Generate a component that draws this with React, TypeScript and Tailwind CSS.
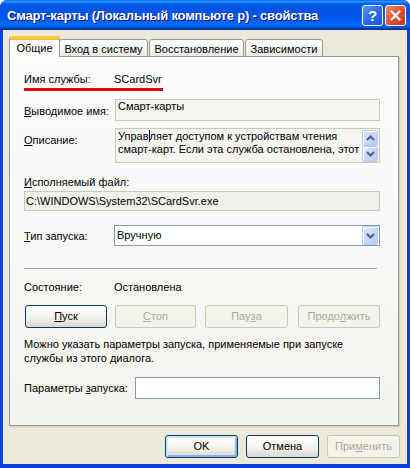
import React from "react";

const Chev = ({ up = false }: { up?: boolean }) => (
  <svg width="9" height="6" viewBox="0 0 9 6">
    <path
      d={up ? "M1 5 L4.5 1.5 L8 5" : "M1 1 L4.5 4.5 L8 1"}
      fill="none"
      stroke="#4D6185"
      strokeWidth="2"
    />
  </svg>
);

const ScrollBtn = ({ up = false, h }: { up?: boolean; h: string }) => (
  <div
    className={`w-[16px] ${h} flex items-center justify-center rounded-[2px] border border-[#B7CBF6] bg-gradient-to-br from-[#DCE7FE] to-[#B6CBFA] shadow-[inset_1px_1px_0_#FFFFFF]`}
  >
    <Chev up={up} />
  </div>
);

const Btn = ({
  children,
  w,
  disabled = false,
  def = false,
  cls = "",
}: {
  children: React.ReactNode;
  w: string;
  disabled?: boolean;
  def?: boolean;
  cls?: string;
}) => (
  <div
    className={`${w} h-[23px] ${cls} flex items-center justify-center rounded-[3px] border ${
      disabled
        ? "border-[#C9C7BA] bg-[#F5F4EA] text-[#ACA899]"
        : "border-[#003C74] bg-gradient-to-b from-[#FFFFFF] via-[#F5F4EF] to-[#DCD8CC] text-black"
    } ${def ? "shadow-[inset_1px_1px_0_1px_#CEE7FF,inset_-1px_-1px_0_1px_#8DAEEC]" : ""}`}
  >
    {children}
  </div>
);

export default function App() {
  return (
    <div className="w-[410px] h-[468px] font-['Liberation_Sans',Arial,sans-serif] text-[11px] leading-[13px] text-black overflow-hidden flex flex-col bg-[#0842D8] rounded-t-[7px]">
      {/* Title bar */}
      <div className="h-[30px] shrink-0 flex items-center pl-[7px] pr-[4px] rounded-t-[7px] bg-[linear-gradient(to_bottom,#0058ee_0%,#3593ff_4%,#288eff_6%,#127dff_8%,#036ffc_10%,#0262ee_14%,#0057e5_20%,#0054e3_24%,#0055eb_56%,#005bf5_66%,#026afe_76%,#0062ef_86%,#0052d6_92%,#0040ab_94%,#003092_100%)]">
        <div className="flex-1 min-w-0 whitespace-nowrap text-white font-bold text-[13px] leading-[16px] [text-shadow:1px_1px_#0F1089] tracking-[-0.2px] pt-[1px]">
          Смарт-карты (Локальный компьюте р) - свойства
        </div>
        <div className="flex gap-[2px] mt-[1px] shrink-0">
          <div className="w-[21px] h-[21px] rounded-[3px] border border-white bg-gradient-to-br from-[#5A97F8] via-[#2B6CE6] to-[#1E56CF] flex items-center justify-center text-white font-bold text-[15px] leading-none">
            ?
          </div>
          <div className="w-[21px] h-[21px] rounded-[3px] border border-white bg-gradient-to-br from-[#F08A64] via-[#DD5230] to-[#C23A15] flex items-center justify-center">
            <svg width="11" height="11" viewBox="0 0 11 11">
              <path d="M1.5 1.5 L9.5 9.5 M9.5 1.5 L1.5 9.5" stroke="#FFFFFF" strokeWidth="2.2" strokeLinecap="square" />
            </svg>
          </div>
        </div>
      </div>

      {/* Body */}
      <div className="flex-1 mx-[3px] mb-[4px] bg-[#ECE9D8] flex flex-col pl-[6px] pt-[6px]">
        {/* Tabs */}
        <div className="flex items-end h-[21px]">
          <div className="relative z-10 w-[51px] h-[21px] bg-white border-x border-[#919B9C] rounded-t-[3px] border-t-[3px] border-t-[#FFC83C] shadow-[inset_0_1px_0_#F4B44A] flex items-start justify-center pt-[3px]">
            Общие
          </div>
          <div className="-ml-px w-[89px] h-[18px] border border-[#919B9C] rounded-t-[3px] bg-gradient-to-b from-[#FFFFFF] to-[#ECEBE6] flex justify-center pt-[3px]">
            Вход в систему
          </div>
          <div className="ml-px w-[95px] h-[18px] border border-[#919B9C] rounded-t-[3px] bg-gradient-to-b from-[#FFFFFF] to-[#ECEBE6] flex justify-center pt-[3px]">
            Восстановление
          </div>
          <div className="ml-px w-[78px] h-[18px] border border-[#919B9C] rounded-t-[3px] bg-gradient-to-b from-[#FFFFFF] to-[#ECEBE6] flex justify-center pt-[3px]">
            Зависимости
          </div>
        </div>

        {/* Panel */}
        <div className="relative -mt-px w-[390px] h-[370px] border border-[#919B9C] bg-gradient-to-b from-[#FCFCFE] to-[#F4F3EE] shadow-[1px_1px_0_#D0CEBF,2px_2px_0_#E3E0D0] pl-[14px] flex flex-col">
          {/* Service name */}
          <div className="mt-[16px] flex h-[13px]">
            <div className="w-[90px]">Имя службы:</div>
            <div>SCardSvr</div>
          </div>
          <div className="mt-[2px] h-[3px] w-[139px] bg-[#E80000]" />

          {/* Display name */}
          <div className="mt-[8px] flex h-[22px]">
            <div className="w-[91px] pt-[6px]">
              <u>В</u>ыводимое имя:
            </div>
            <div className="w-[265px] h-[22px] border border-[#CBC8B8] bg-[#F6F5F1] pl-[2px]">Смарт-карты</div>
          </div>

          {/* Description */}
          <div className="mt-[7px] flex h-[35px]">
            <div className="w-[91px] pt-[6px]">
              <u>О</u>писание:
            </div>
            <div className="w-[265px] h-[35px] border border-[#CBC8B8] bg-[#F6F5F1] flex">
              <div className="flex-1 pl-[2px] pt-px leading-[12.5px]">
                Управ<span className="inline-block w-px h-[12px] bg-black align-[-2px]" />ляет доступом к устройствам чтения
                <br />
                смарт-карт. Если эта служба остановлена, этот
              </div>
              <div className="flex flex-col pr-px pt-px">
                <ScrollBtn up h="h-[17px]" />
                <ScrollBtn h="h-[16px]" />
              </div>
            </div>
          </div>

          {/* Executable */}
          <div className="mt-[13px] h-[13px]">
            <u>И</u>сполняемый файл:
          </div>
          <div className="mt-[2px] w-[356px] h-[20px] border border-[#CBC8B8] bg-[#F1F0EA] flex items-center pl-[1px]">
            C:\WINDOWS\System32\SCardSvr.exe
          </div>

          {/* Startup type */}
          <div className="mt-[14px] flex h-[21px]">
            <div className="w-[90px] pt-[5px]">
              <u>Т</u>ип запуска:
            </div>
            <div className="w-[266px] h-[21px] border border-[#7F9DB9] bg-white flex items-center">
              <div className="flex-1 pl-[2px]">Вручную</div>
              <div className="mr-px w-[16px] h-[19px]">
                <ScrollBtn h="h-[19px]" />
              </div>
            </div>
          </div>

          {/* Separator */}
          <div className="mt-[22px] w-[353px] h-[2px] border-t border-[#ACA899] border-b border-b-white" />

          {/* Status */}
          <div className="mt-[11px] flex h-[13px]">
            <div className="w-[90px]">Состояние:</div>
            <div>Остановлена</div>
          </div>

          {/* Service buttons */}
          <div className="mt-[11px] flex">
            <Btn w="w-[82px]" cls="ml-px">
              <span>
                <u>П</u>уск
              </span>
            </Btn>
            <Btn w="w-[81px]" cls="ml-[8px]" disabled>
              <span>
                <u>С</u>топ
              </span>
            </Btn>
            <Btn w="w-[83px]" cls="ml-[9px]" disabled>
              <span>
                Пау<u>з</u>а
              </span>
            </Btn>
            <Btn w="w-[82px]" cls="ml-[10px]" disabled>
              <span>
                Продо<u>л</u>жить
              </span>
            </Btn>
          </div>

          {/* Hint */}
          <div className="mt-[10px] leading-[13.5px]">
            Можно указать параметры запуска, применяемые при запуске
            <br />
            службы из этого диалога.
          </div>

          {/* Params */}
          <div className="mt-[12px] flex h-[22px]">
            <div className="w-[111px] pt-[5px]">
              Параметры <u>з</u>апуска:
            </div>
            <div className="w-[245px] h-[22px] border border-[#7F9DB9] bg-white" />
          </div>
        </div>

        {/* Bottom buttons */}
        <div className="mt-[9px] flex pl-[156px]">
          <Btn w="w-[73px]" def>
            OK
          </Btn>
          <Btn w="w-[73px]" cls="ml-[8px]">
            Отмена
          </Btn>
          <Btn w="w-[73px]" cls="ml-[8px]" disabled>
            <span>
              При<u>м</u>енить
            </span>
          </Btn>
        </div>
      </div>
    </div>
  );
}
